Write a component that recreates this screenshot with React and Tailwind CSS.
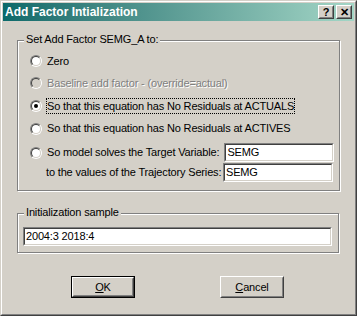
import React from 'react';

const face = "bg-[#d4d0c8]";

const Radio = ({ checked, disabled }) => (
    <div className="w-[12px] h-[12px] shrink-0 rounded-full border border-t-[#808080] border-l-[#808080] border-r-white border-b-white flex">
        <div className={`flex-1 rounded-full border border-t-[#404040] border-l-[#404040] border-r-[#d4d0c8] border-b-[#d4d0c8] flex items-center justify-center ${disabled ? "bg-[#d4d0c8]" : "bg-white"}`}>
            {checked && <div className="w-[4px] h-[4px] rounded-full bg-black" />}
        </div>
    </div>
);

const Field = ({ value, className = "" }) => (
    <div className={`h-[19px] shrink-0 border border-t-[#808080] border-l-[#808080] border-r-white border-b-white flex ${className}`}>
        <div className="flex-1 border border-t-[#404040] border-l-[#404040] border-r-[#d4d0c8] border-b-[#d4d0c8] bg-white flex items-center pl-[1px] text-black">
            {value}
        </div>
    </div>
);

const GroupBox = ({ label, className = "", children }) => (
    <div className={`relative border border-[#808080] shadow-[inset_1px_1px_0_#fff,1px_1px_0_#fff] ${className}`}>
        <span className={`absolute -top-[8px] left-[6px] px-[2px] leading-[13px] ${face}`}>{label}</span>
        {children}
    </div>
);

const TitleButton = ({ children }) => (
    <div className="w-[16px] h-[14px] border border-t-white border-l-white border-r-[#404040] border-b-[#404040] flex">
        <div className={`flex-1 border border-t-[#d4d0c8] border-l-[#d4d0c8] border-r-[#808080] border-b-[#808080] ${face} flex items-center justify-center text-black font-bold text-[11px] leading-none tracking-normal`}>
            {children}
        </div>
    </div>
);

const Button = ({ children, isDefault }) => (
    <div className={`w-[64px] h-[22px] flex ${isDefault ? "border border-black" : ""}`}>
        <div className="flex-1 border border-t-white border-l-white border-r-[#404040] border-b-[#404040] flex">
            <div className={`flex-1 border border-t-[#d4d0c8] border-l-[#d4d0c8] border-r-[#808080] border-b-[#808080] ${face} flex items-center justify-center`}>
                {children}
            </div>
        </div>
    </div>
);

export default function App() {
    return (
        <div className="w-[357px] h-[316px] border border-t-[#d4d0c8] border-l-[#d4d0c8] border-r-[#404040] border-b-[#404040] flex font-['Liberation_Sans',Arial,sans-serif] text-[11px] tracking-[-0.16px] whitespace-nowrap text-black">
            <div className={`flex-1 border border-t-white border-l-white border-r-[#808080] border-b-[#808080] p-px ${face} flex flex-col`}>
                {/* Title bar */}
                <div className="h-[18px] bg-gradient-to-r from-[#0a6a6a] to-[#a3d6c6] flex items-center justify-between pl-[2px] pr-[2px]">
                    <span className="text-white font-bold text-[12px] tracking-normal">Add Factor Intialization</span>
                    <div className="flex gap-[2px]">
                        <TitleButton>?</TitleButton>
                        <TitleButton>✕</TitleButton>
                    </div>
                </div>

                {/* Group 1 */}
                <GroupBox label="Set Add Factor SEMG_A to:" className="mt-[19px] ml-[14px] w-[323px] h-[151px]">
                    <div className="flex flex-col pt-[9px] pl-[12px] pr-[6px]">
                        <div className="h-[22px] flex items-center gap-[5px]">
                            <Radio />
                            <span>Zero</span>
                        </div>
                        <div className="h-[22px] flex items-center gap-[5px]">
                            <Radio disabled />
                            <span className="text-[#808080] [text-shadow:1px_1px_0_#fff]">Baseline add factor - (override=actual)</span>
                        </div>
                        <div className="h-[23px] flex items-center gap-[4px]">
                            <Radio checked />
                            <span className="border border-dotted border-black leading-[14px] px-0">So that this equation has No Residuals at ACTUALS</span>
                        </div>
                        <div className="h-[23px] flex items-center gap-[5px]">
                            <Radio />
                            <span>So that this equation has No Residuals at ACTIVES</span>
                        </div>
                        <div className="mt-[3px] flex items-center gap-[5px]">
                            <Radio />
                            <span className="flex-1">So model solves the Target Variable:</span>
                            <Field value="SEMG" className="w-[110px]" />
                        </div>
                        <div className="mt-[1px] flex items-center pl-[16px]">
                            <span className="flex-1">to the values of the Trajectory Series:</span>
                            <Field value="SEMG" className="w-[110px]" />
                        </div>
                    </div>
                </GroupBox>

                {/* Group 2 */}
                <GroupBox label="Initialization sample" className="mt-[22px] ml-[14px] w-[322px] h-[40px]">
                    <div className="pt-[13px] pl-[5px] pr-[6px]">
                        <Field value="2004:3 2018:4" />
                    </div>
                </GroupBox>

                {/* Buttons */}
                <div className="mt-[23px] flex pl-[68px] gap-[85px]">
                    <Button isDefault><span><span className="underline">O</span>K</span></Button>
                    <Button><span><span className="underline">C</span>ancel</span></Button>
                </div>
            </div>
        </div>
    );
}
